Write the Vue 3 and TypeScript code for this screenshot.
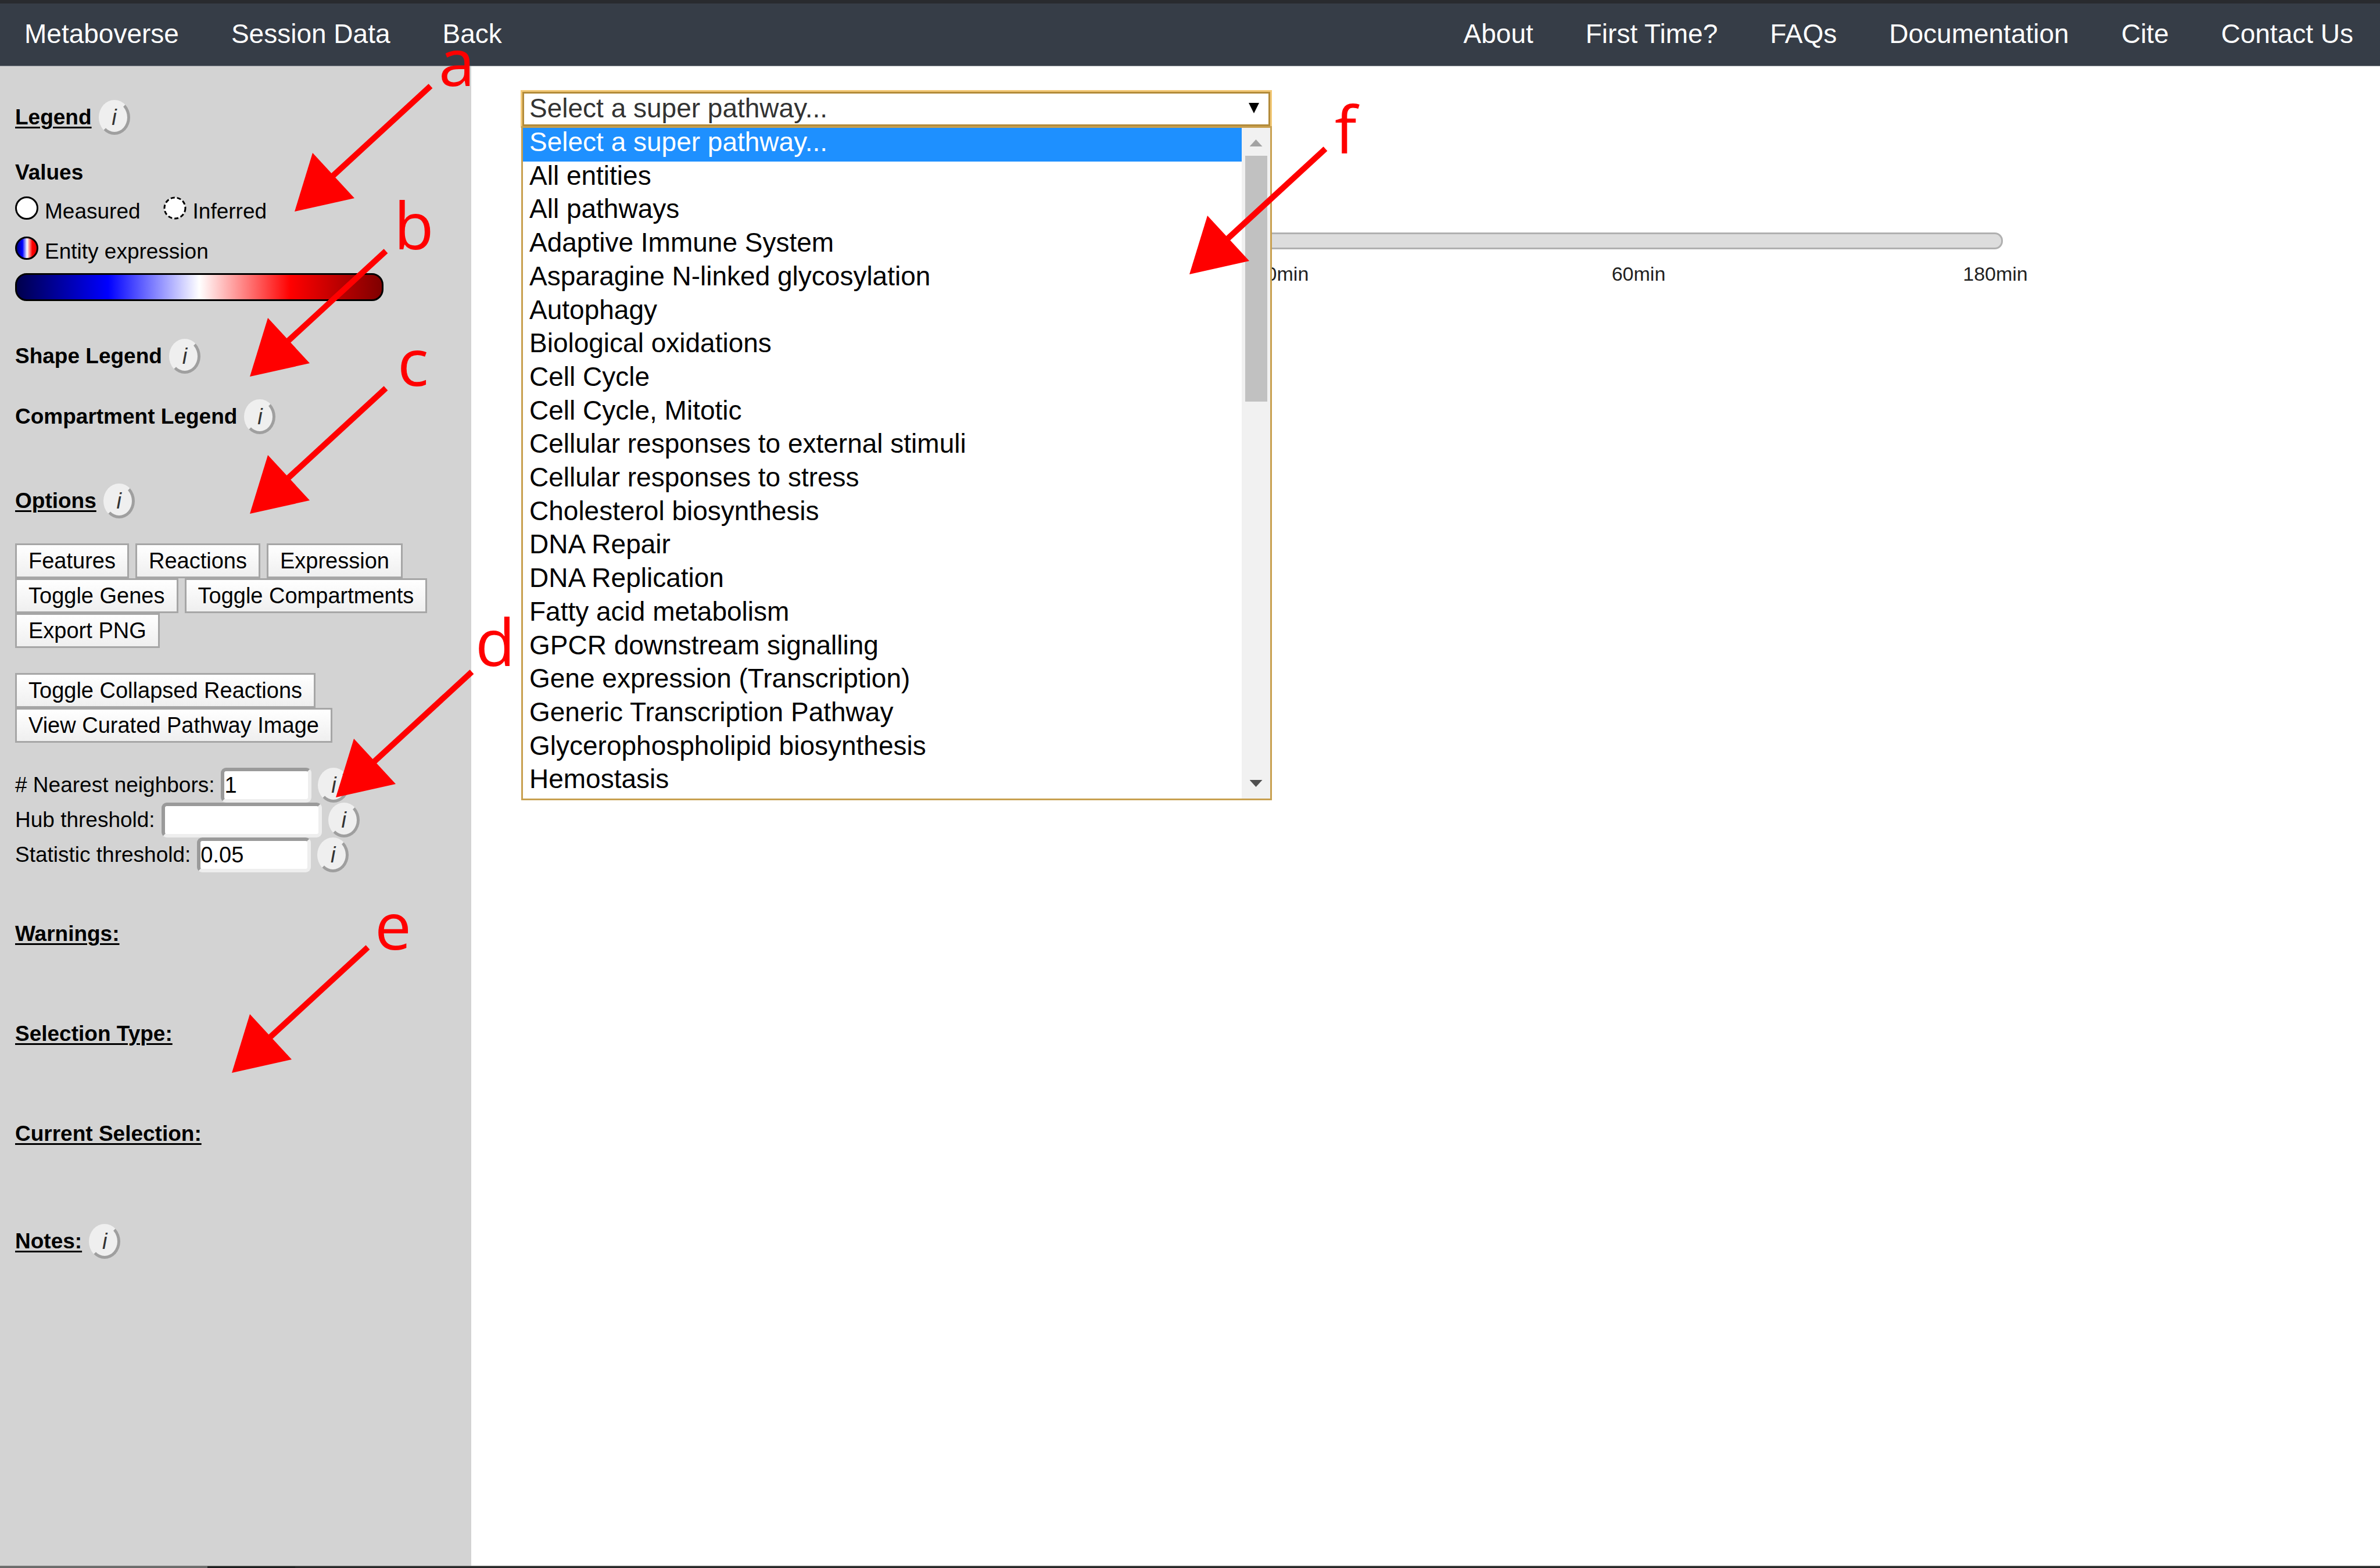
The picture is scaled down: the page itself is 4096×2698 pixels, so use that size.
<script setup lang="ts">
import { ref } from 'vue'

interface Callout {
  letter: string
  tipX: number
  tipY: number
  textX: number
  textY: number
}

const leftLinks: string[] = ['Metaboverse', 'Session Data', 'Back']
const rightLinks: string[] = ['About', 'First Time?', 'FAQs', 'Documentation', 'Cite', 'Contact Us']

const viewRows: string[][] = [
  ['Features', 'Reactions', 'Expression'],
  ['Toggle Genes', 'Toggle Compartments'],
  ['Export PNG'],
]
const pathwayRows: string[][] = [['Toggle Collapsed Reactions'], ['View Curated Pathway Image']]

const neighbors = ref('1')
const hub = ref('')
const statistic = ref('0.05')

const placeholder = 'Select a super pathway...'
const pathways: string[] = [
  placeholder,
  'All entities',
  'All pathways',
  'Adaptive Immune System',
  'Asparagine N-linked glycosylation',
  'Autophagy',
  'Biological oxidations',
  'Cell Cycle',
  'Cell Cycle, Mitotic',
  'Cellular responses to external stimuli',
  'Cellular responses to stress',
  'Cholesterol biosynthesis',
  'DNA Repair',
  'DNA Replication',
  'Fatty acid metabolism',
  'GPCR downstream signalling',
  'Gene expression (Transcription)',
  'Generic Transcription Pathway',
  'Glycerophospholipid biosynthesis',
  'Hemostasis',
]
const selected = ref(placeholder)

const times: string[] = ['30min', '60min', '180min']
const timeIndex = ref(0)

const callouts: Callout[] = [
  { letter: 'a', tipX: 507, tipY: 364, textX: 755, textY: 148 },
  { letter: 'b', tipX: 430, tipY: 648, textX: 678, textY: 429 },
  { letter: 'c', tipX: 430, tipY: 884, textX: 684, textY: 664 },
  { letter: 'd', tipX: 578, tipY: 1372, textX: 818, textY: 1146 },
  { letter: 'e', tipX: 399, tipY: 1846, textX: 645, textY: 1634 },
  { letter: 'f', tipX: 2047, tipY: 472, textX: 2297, textY: 264 },
]
</script>

<template>
  <div class="page">
    <header class="topbar">
      <nav class="links" aria-label="Session">
        <a v-for="link in leftLinks" :key="link" href="#">{{ link }}</a>
      </nav>
      <nav class="links" aria-label="Help">
        <a v-for="link in rightLinks" :key="link" href="#">{{ link }}</a>
      </nav>
    </header>

    <div class="body">
      <aside class="sidebar">
        <section class="legend">
          <div class="heading">
            <h2 class="underlined">Legend</h2>
            <button type="button" class="info" aria-label="About the legend">i</button>
          </div>
          <h3 class="values">Values</h3>
          <div class="keys">
            <div class="key-row">
              <span class="key"><span class="dot"></span>Measured</span>
              <span class="key">
                <svg class="dashed" viewBox="0 0 40 40" aria-hidden="true">
                  <circle cx="20" cy="20" r="18" fill="#fff" stroke="#000" stroke-width="3" stroke-dasharray="7 4" />
                </svg>
                Inferred
              </span>
            </div>
            <div class="key-row">
              <span class="key"><span class="dot expression"></span>Entity expression</span>
            </div>
          </div>
          <div class="scale"></div>
          <div class="heading shape">
            <h3>Shape Legend</h3>
            <button type="button" class="info" aria-label="About the shape legend">i</button>
          </div>
          <div class="heading compartment">
            <h3>Compartment Legend</h3>
            <button type="button" class="info" aria-label="About the compartment legend">i</button>
          </div>
        </section>

        <section class="options">
          <div class="heading">
            <h2 class="underlined">Options</h2>
            <button type="button" class="info" aria-label="About the options">i</button>
          </div>
          <div class="button-group">
            <div v-for="(row, r) in viewRows" :key="r" class="button-row">
              <button v-for="label in row" :key="label" type="button" class="action">{{ label }}</button>
            </div>
          </div>
          <div class="button-group">
            <div v-for="(row, r) in pathwayRows" :key="r" class="button-row">
              <button v-for="label in row" :key="label" type="button" class="action">{{ label }}</button>
            </div>
          </div>
          <div class="fields">
            <div class="field">
              <label for="neighbors"># Nearest neighbors:</label>
              <input id="neighbors" v-model="neighbors" class="small" type="text" inputmode="numeric" />
              <button type="button" class="info" aria-label="About nearest neighbors">i</button>
            </div>
            <div class="field">
              <label for="hub">Hub threshold:</label>
              <input id="hub" v-model="hub" class="large" type="text" inputmode="numeric" />
              <button type="button" class="info" aria-label="About the hub threshold">i</button>
            </div>
            <div class="field">
              <label for="statistic">Statistic threshold:</label>
              <input id="statistic" v-model="statistic" class="medium" type="text" inputmode="decimal" />
              <button type="button" class="info" aria-label="About the statistic threshold">i</button>
            </div>
          </div>
        </section>

        <section class="status">
          <div class="heading"><h2 class="underlined">Warnings:</h2></div>
          <div class="heading"><h2 class="underlined">Selection Type:</h2></div>
          <div class="heading"><h2 class="underlined">Current Selection:</h2></div>
        </section>
        <div class="heading notes">
          <h2 class="underlined">Notes:</h2>
          <button type="button" class="info" aria-label="About the notes">i</button>
        </div>
      </aside>

      <main class="content">
        <div class="picker">
          <select v-model="selected" aria-label="Super pathway">
            <option v-for="name in pathways" :key="name" :value="name">{{ name }}</option>
          </select>
          <div class="menu">
            <ul class="items" role="listbox" aria-label="Super pathways">
              <li
                v-for="name in pathways"
                :key="name"
                role="option"
                :aria-selected="name === selected"
                :class="{ active: name === selected }"
                @click="selected = name"
              >
                {{ name }}
              </li>
            </ul>
            <div class="scrollbar" aria-hidden="true">
              <span class="arrow up"></span>
              <span class="thumb"></span>
              <span class="arrow down"></span>
            </div>
          </div>
        </div>

        <div class="timeline">
          <input v-model.number="timeIndex" type="range" min="0" max="2" aria-label="Time point" />
          <div class="ticks">
            <span v-for="time in times" :key="time">{{ time }}</span>
          </div>
        </div>
      </main>
    </div>

    <footer class="edge"></footer>

    <svg class="callouts" viewBox="0 0 4096 2698" preserveAspectRatio="xMinYMin meet">
      <g v-for="c in callouts" :key="c.letter">
        <g :transform="`translate(${c.tipX} ${c.tipY})`">
          <path d="M234 -216 L60 -56" stroke="#f00" stroke-width="10" fill="none" />
          <path d="M0 0 L31 -101 L103 -23 Z" fill="#f00" />
        </g>
        <text :x="c.textX" :y="c.textY">{{ c.letter }}</text>
      </g>
    </svg>
  </div>
</template>

<style>
body {
  margin: 0;
  background: #fff;
}
</style>

<style scoped>
.page {
  position: relative;
  display: flex;
  flex-direction: column;
  min-height: 100vh;
  font-family: 'Liberation Sans', Arial, sans-serif;
  font-size: 37px;
  color: #000;
}

.page *,
.page *::after {
  box-sizing: border-box;
}

.topbar {
  display: flex;
  justify-content: space-between;
  align-items: center;
  height: 114px;
  padding: 0 46px 4px 42px;
  border-top: 6px solid #292b2f;
  border-bottom: 1px solid #858b92;
  background: #363d47;
}

.links {
  display: flex;
  gap: 90px;
}

.links a {
  color: #fff;
  font-size: 46px;
  line-height: 54px;
  text-decoration: none;
  white-space: nowrap;
}

.body {
  display: flex;
  flex: 1;
}

.sidebar {
  flex: none;
  width: 19.8%;
  padding: 58px 26px 0;
  background: #d3d3d3;
}

h2,
h3 {
  margin: 0;
  font-size: 37px;
  font-weight: bold;
  line-height: 60px;
  white-space: nowrap;
}

.underlined {
  text-decoration: underline;
  text-decoration-thickness: 3px;
  text-underline-offset: 4px;
}

.heading {
  display: flex;
  align-items: center;
  gap: 12px;
  height: 60px;
}

.info {
  flex: none;
  width: 54px;
  height: 60px;
  padding: 0;
  border: 5px solid;
  border-color: #efefef #9f9f9f #9f9f9f #efefef;
  border-radius: 50%;
  background: #efefef;
  color: #333;
  font: italic 38px/50px 'Liberation Sans', Arial, sans-serif;
}

.values {
  margin-top: 35px;
}

.keys {
  display: flex;
  flex-direction: column;
  gap: 17px;
  margin-top: 11px;
}

.key-row {
  display: flex;
  gap: 39px;
}

.key {
  display: flex;
  gap: 11px;
  height: 52px;
  line-height: 52px;
}

.dot {
  width: 40px;
  height: 40px;
  border: 3px solid #000;
  border-radius: 50%;
  background: #fff;
}

.dashed {
  width: 40px;
  height: 40px;
}

.expression {
  background: linear-gradient(90deg, #00007f 0%, #00f 28%, #fff 52%, #f00 78%, #d00 100%);
}

.scale {
  width: 634px;
  height: 48px;
  margin-top: 11px;
  border: 3px solid #000;
  border-radius: 20px;
  background: linear-gradient(90deg, #00004c, #00f, #fff, #f00, #7f0000);
}

.shape {
  margin-top: 65px;
}

.compartment {
  margin-top: 44px;
}

.options {
  margin-top: 85px;
}

.button-group {
  margin-top: 43px;
}

.button-row {
  display: flex;
  gap: 11px;
}

.action {
  height: 60px;
  padding: 0 20px;
  border: 3px solid #a6a6a6;
  background: linear-gradient(#fff, #efefef);
  color: #000;
  font: 38px/54px 'Liberation Sans', Arial, sans-serif;
  white-space: nowrap;
}

.fields {
  margin-top: 43px;
}

.field {
  display: flex;
  align-items: center;
  gap: 11px;
  height: 60px;
}

.field label {
  white-space: nowrap;
}

.field input {
  height: 60px;
  padding: 0;
  border: 6px solid;
  border-color: #9a9a9a #eee #eee #9a9a9a;
  border-radius: 9px;
  background: #fff;
  color: #000;
  font: 38px/48px 'Liberation Sans', Arial, sans-serif;
}

.small {
  width: 156px;
}

.medium {
  width: 196px;
}

.large {
  width: 276px;
}

.status {
  display: flex;
  flex-direction: column;
  gap: 112px;
  margin-top: 76px;
}

.notes {
  margin-top: 125px;
}

.content {
  flex: 1;
  padding: 44px 0 0 88px;
  background: #fff;
}

.picker {
  position: relative;
  width: 1287px;
}

.picker select {
  display: block;
  width: 100%;
  height: 59px;
  padding: 0 9px 2px;
  border: 3px solid #b38b3a;
  border-radius: 0;
  outline: 3px solid #f2c876;
  appearance: none;
  background: #fff;
  color: #333;
  font: 46px/51px 'Liberation Sans', Arial, sans-serif;
}

.picker::after {
  content: '';
  position: absolute;
  top: 19px;
  right: 19px;
  width: 18px;
  height: 18px;
  background: #000;
  clip-path: polygon(0 0, 100% 0, 50% 100%);
}

.menu {
  position: absolute;
  top: 100%;
  left: -2px;
  right: -3px;
  z-index: 1;
  display: flex;
  height: 1160px;
  border: 3px solid #c8a050;
  background: #fff;
}

.items {
  display: flex;
  flex: 1;
  flex-direction: column;
  margin: 0;
  padding: 0;
  list-style: none;
}

.items li {
  flex: 1;
  min-height: 0;
  padding-left: 11px;
  font-size: 46px;
  line-height: 48px;
}

.items .active {
  background: #1e90ff;
  color: #fff;
}

.scrollbar {
  display: flex;
  flex-direction: column;
  align-items: center;
  width: 49px;
  padding: 20px 0;
  background: #f1f1f1;
}

.arrow {
  width: 22px;
  height: 12px;
}

.up {
  background: #a3a3a3;
  clip-path: polygon(50% 0, 100% 100%, 0 100%);
}

.down {
  margin-top: auto;
  background: #505050;
  clip-path: polygon(0 0, 100% 0, 50% 100%);
}

.thumb {
  width: 38px;
  height: 423px;
  margin-top: 16px;
  background: #c1c1c1;
}

.timeline {
  margin: 183px 355px 0 1000px;
}

.timeline input {
  display: block;
  width: calc(100% - 294px);
  height: 29px;
  margin: 0;
  border: 3px solid #b0b0b0;
  border-radius: 14px;
  appearance: none;
  background: #ddd;
}

.timeline input::-webkit-slider-thumb {
  appearance: none;
  width: 22px;
  height: 22px;
  border-radius: 50%;
  background: #fff;
}

.ticks {
  display: flex;
  margin-top: 22px;
  color: #222;
  font-size: 34px;
  line-height: 40px;
  text-align: center;
}

.ticks span {
  flex: 1;
}

.edge {
  height: 4px;
  border-top: 1px solid #808180;
  background: linear-gradient(90deg, #6a6b6a 357px, #1e2020 357px, #1e2020 508px, #272929 508px);
}

.callouts {
  position: absolute;
  top: 0;
  left: 0;
  z-index: 2;
  width: 100%;
  pointer-events: none;
}

.callouts text {
  fill: #f00;
  font-family: 'Open Sans', 'Noto Sans', sans-serif;
  font-size: 112px;
}
</style>
